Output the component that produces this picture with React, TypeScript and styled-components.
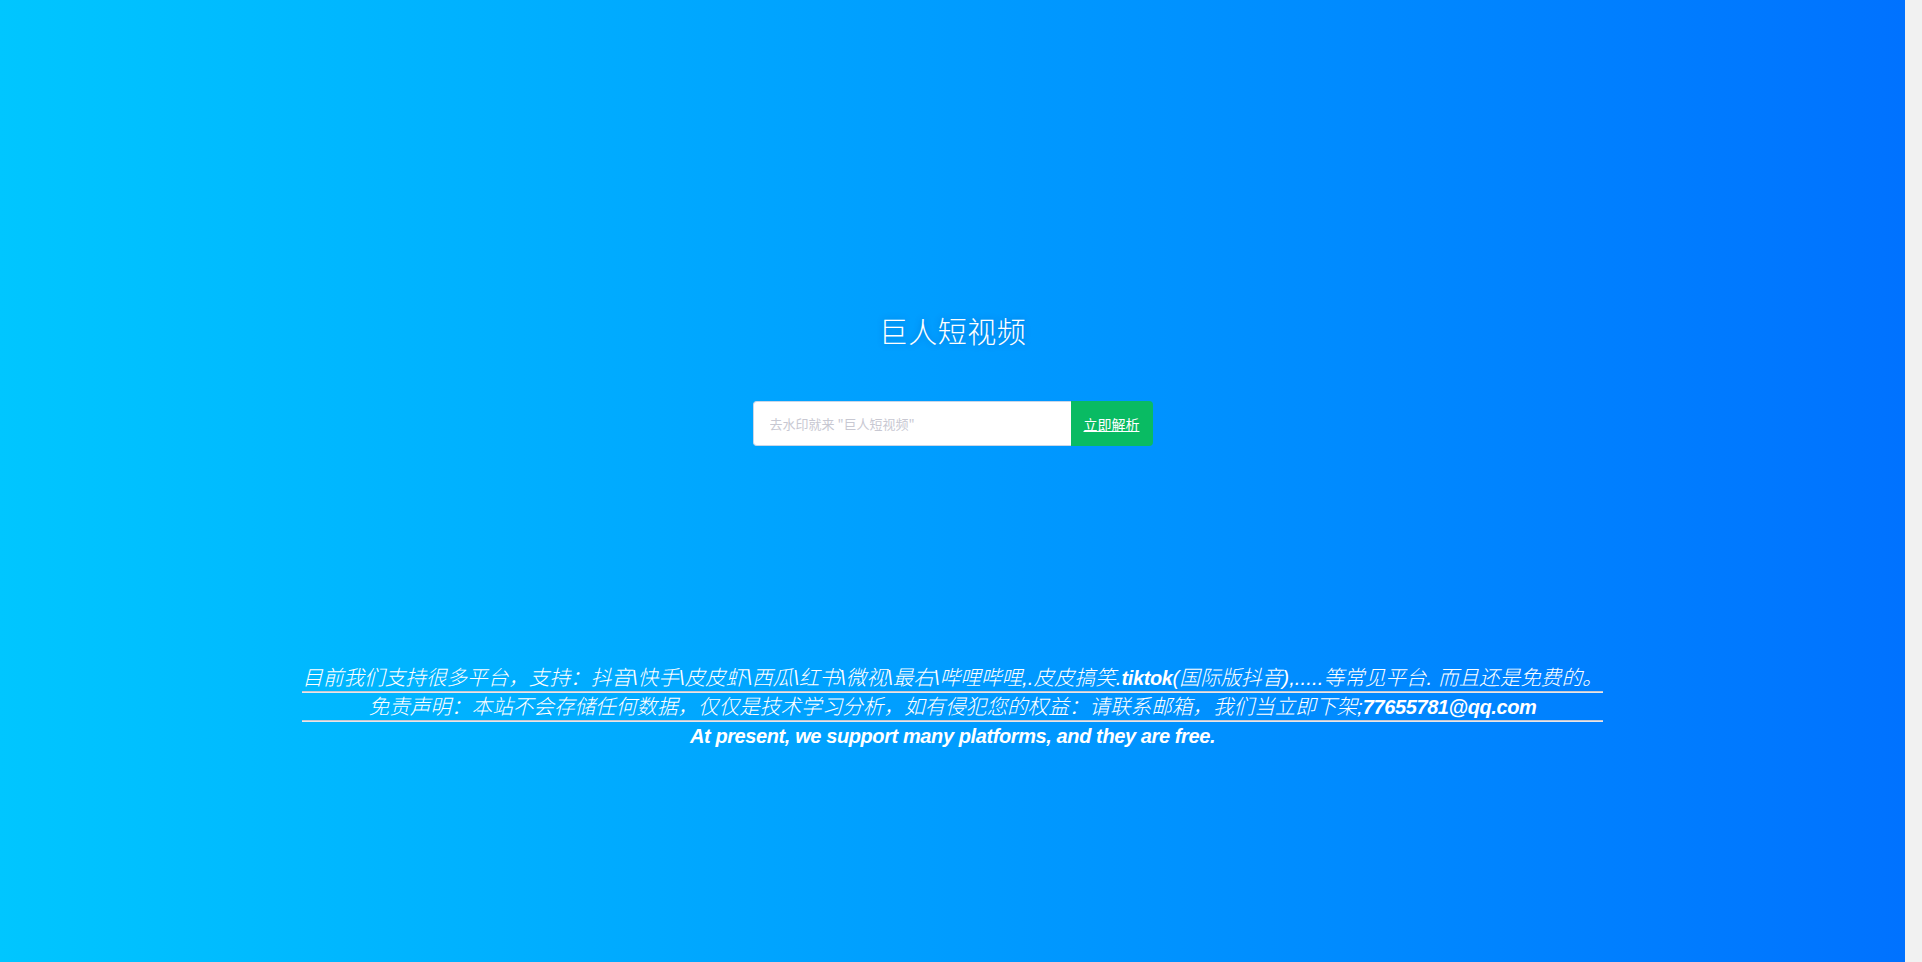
import React from "react";
import styled, { createGlobalStyle } from "styled-components";

const GlobalStyle = createGlobalStyle`
  html, body {
    margin: 0;
    padding: 0;
  }
  body {
    font-family: "Liberation Sans", "Noto Sans CJK SC", sans-serif;
  }
  * { box-sizing: border-box; }
`;

const Window = styled.div`
  display: flex;
  min-height: 100vh;
`;

const ScrollTrack = styled.div`
  flex: 0 0 17px;
  background: #f1f1f1;
`;

const Page = styled.div`
  flex: 1;
  min-width: 0;
  background: linear-gradient(to right, #00c6ff, #0072ff);
  display: flex;
  flex-direction: column;
  align-items: center;
  padding-top: 308px;
`;

const Title = styled.h1`
  margin: 0;
  font-family: "Noto Sans CJK SC", sans-serif;
  font-weight: 300;
  font-size: 29px;
  line-height: 45px;
  color: #fff;
  text-shadow: 0 0 6px rgba(0, 60, 140, 0.35);
  letter-spacing: 0.5px;
`;

const SearchForm = styled.form`
  display: flex;
  margin-top: 48px;
  width: 400px;
  height: 45px;
`;

const SearchInput = styled.input`
  flex: 1;
  height: 100%;
  border: 1px solid #c9d6e8;
  border-right: none;
  border-radius: 4px 0 0 4px;
  background: #fff;
  padding: 0 16px;
  font-family: "Noto Sans CJK SC", sans-serif;
  font-size: 13px;
  color: #333;
  outline: none;
  &::placeholder {
    color: #c8c8d2;
  }
`;

const SubmitButton = styled.button`
  width: 82px;
  height: 100%;
  border: none;
  border-radius: 0 4px 4px 0;
  background: #09bb63;
  color: #fff;
  font-family: "Noto Sans CJK SC", sans-serif;
  font-size: 14px;
  text-decoration: underline;
  text-underline-offset: 1px;
  cursor: pointer;
  padding: 0;
`;

const Notice = styled.div`
  margin-top: 218px;
  display: flex;
  flex-direction: column;
  align-items: stretch;
  color: #fff;
  font-style: italic;
  font-size: 20.6px;
  font-weight: 300;
`;

const Line = styled.p`
  margin: 0;
  height: 27px;
  line-height: 27px;
  text-align: center;
  white-space: nowrap;
`;

const Rule = styled.hr`
  margin: 0;
  height: 0;
  border: none;
  border-top: 1px solid #c9c9d2;
  border-bottom: 1px solid #e6e6ea;
`;

const Latin = styled.span`
  font-family: "Liberation Sans", sans-serif;
  font-size: 20px;
  line-height: 1;
  font-weight: 700;
  letter-spacing: -0.4px;
`;

export default function App() {
  return (
    <>
      <GlobalStyle />
      <Window>
        <Page>
          <Title>巨人短视频</Title>
          <SearchForm onSubmit={(e) => e.preventDefault()}>
            <SearchInput type="text" placeholder={'去水印就来 "巨人短视频"'} />
            <SubmitButton type="submit">立即解析</SubmitButton>
          </SearchForm>
          <Notice>
            <Line>
              目前我们支持很多平台，支持：抖音\快手\皮皮虾\西瓜\红书\微视\最右\哔哩哔哩,.皮皮搞笑.<Latin>tiktok</Latin>(国际版抖音),.....等常见平台. 而且还是免费的。
            </Line>
            <Rule />
            <Line>
              免责声明：本站不会存储任何数据，仅仅是技术学习分析，如有侵犯您的权益：请联系邮箱，我们当立即下架;<Latin>77655781@qq.com</Latin>
            </Line>
            <Rule />
            <Line>
              <Latin>At present, we support many platforms, and they are free.</Latin>
            </Line>
          </Notice>
        </Page>
        <ScrollTrack />
      </Window>
    </>
  );
}
